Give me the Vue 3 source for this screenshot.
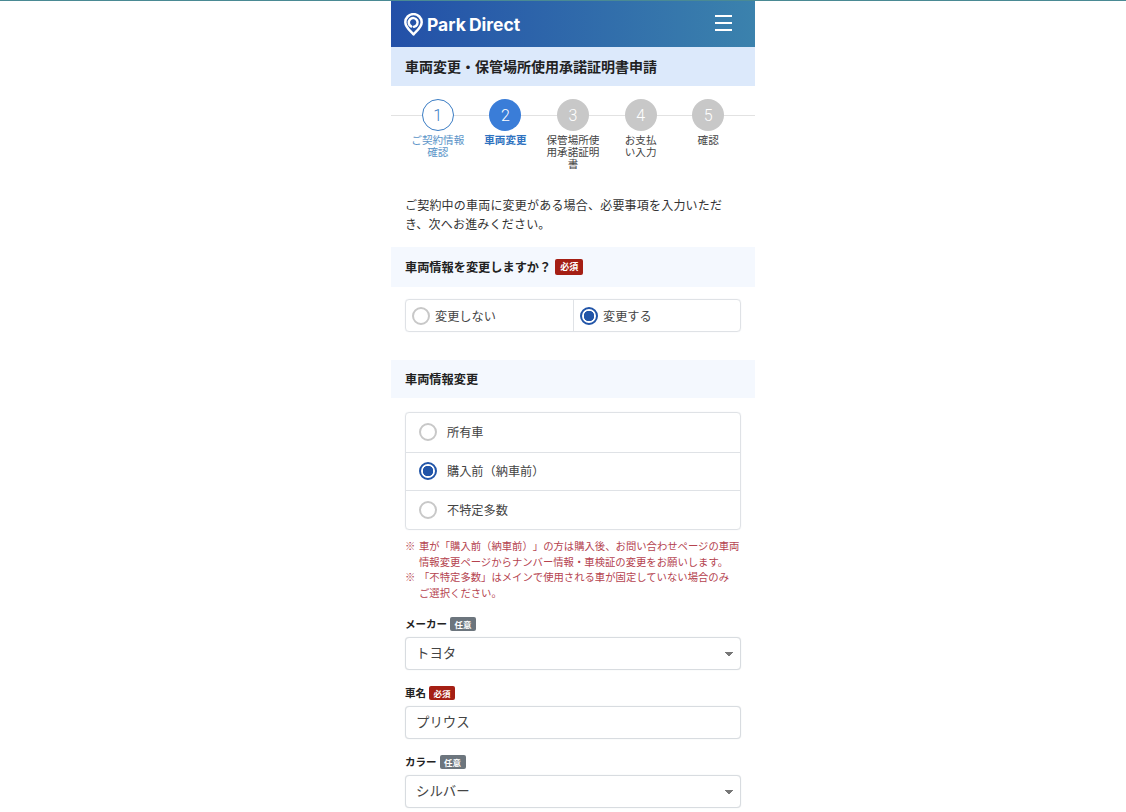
<template>
  <div class="page">
    <div class="phone">
      <header class="header">
        <div class="logo">
          <svg width="19" height="23" viewBox="0 0 19 23" fill="none">
            <path d="M9.5 21.4 C7.4 18.8 1.3 14.6 1.3 9.3 A8.2 8.2 0 0 1 17.7 9.3 C17.7 14.6 11.6 18.8 9.5 21.4 Z" stroke="#fff" stroke-width="2.5" stroke-linejoin="round" />
            <path d="M7.2 13.4 A4.4 4.4 0 1 1 10 13.8" stroke="#fff" stroke-width="2.5" stroke-linecap="round" />
          </svg>
          <span>Park Direct</span>
        </div>
        <button class="menu" type="button" aria-label="menu">
          <i></i><i></i><i></i>
        </button>
      </header>

      <h1 class="title">車両変更・保管場所使用承諾証明書申請</h1>

      <ol class="steps">
        <li v-for="(s, i) in steps" :key="s" class="step" :class="{ done: i === 0, current: i === 1 }">
          <span class="num">{{ i + 1 }}</span>
          <span class="step-label">{{ s }}</span>
        </li>
      </ol>

      <p class="lead">ご契約中の車両に変更がある場合、必要事項を入力いただき、次へお進みください。</p>

      <h2 class="band">車両情報を変更しますか？<span class="badge req big">必須</span></h2>

      <div class="choice">
        <label v-for="c in changeOptions" :key="c" class="choice-item" @click="change = c">
          <span class="radio" :class="{ on: change === c }"></span>{{ c }}
        </label>
      </div>

      <h2 class="band second">車両情報変更</h2>

      <div class="list">
        <label v-for="o in ownerOptions" :key="o" class="list-item" @click="owner = o">
          <span class="radio" :class="{ on: owner === o }"></span>{{ o }}
        </label>
      </div>

      <ul class="notes">
        <li>車が「購入前（納車前）」の方は購入後、お問い合わせページの車両情報変更ページからナンバー情報・車検証の変更をお願いします。</li>
        <li>「不特定多数」はメインで使用される車が固定していない場合のみ<br />ご選択ください。</li>
      </ul>

      <div class="field first">
        <div class="field-label">メーカー<span class="badge opt">任意</span></div>
        <select v-model="maker" class="control">
          <option>トヨタ</option>
        </select>
      </div>
      <div class="field">
        <div class="field-label">車名<span class="badge req">必須</span></div>
        <input v-model="carName" class="control" type="text" />
      </div>
      <div class="field">
        <div class="field-label">カラー<span class="badge opt">任意</span></div>
        <select v-model="color" class="control">
          <option>シルバー</option>
        </select>
      </div>
    </div>
  </div>
</template>

<script setup>
import { ref } from 'vue'

const steps = ['ご契約情報確認', '車両変更', '保管場所使用承諾証明書', 'お支払\nい入力', '確認']
const changeOptions = ['変更しない', '変更する']
const ownerOptions = ['所有車', '購入前（納車前）', '不特定多数']

const change = ref('変更する')
const owner = ref('購入前（納車前）')
const maker = ref('トヨタ')
const carName = ref('プリウス')
const color = ref('シルバー')
</script>

<style scoped>
.page {
  height: 812px;
  overflow: hidden;
  border-top: 1px solid #4a8a94;
  box-sizing: border-box;
  background: #fff;
  font-family: "Noto Sans CJK JP", "Noto Sans", sans-serif;
  color: #333;
  text-spacing-trim: space-all;
}

.phone {
  width: 364px;
  margin-left: 391px;
}

.header {
  height: 46px;
  display: flex;
  align-items: center;
  justify-content: space-between;
  padding: 0 23px 0 13px;
  background: linear-gradient(90deg, #2350a8, #3b82ad);
}

.logo {
  display: flex;
  align-items: center;
  gap: 4px;
  color: #fff;
  font-family: Inter, sans-serif;
  font-weight: 700;
  font-size: 17.5px;
  word-spacing: -1px;
}

.menu {
  width: 17px;
  margin-bottom: 2px;
  padding: 0;
  border: none;
  background: none;
  display: flex;
  flex-direction: column;
  gap: 5px;
}

.menu i {
  display: block;
  height: 2px;
  background: #fff;
}

.title {
  margin: 0;
  height: 39px;
  padding: 0 14px;
  line-height: 39px;
  background: #dce9fb;
  font-size: 14px;
  font-weight: 700;
  color: #222;
}

.steps {
  list-style: none;
  margin: 0;
  padding: 13px 13px 0;
  height: 86px;
  display: grid;
  grid-template-columns: repeat(5, 1fr);
  background: linear-gradient(#e2e2e2, #e2e2e2) 0 29px / 100% 1px no-repeat;
}

.step {
  display: flex;
  flex-direction: column;
  align-items: center;
  color: #444;
}

.num {
  width: 32px;
  height: 32px;
  border-radius: 50%;
  box-sizing: border-box;
  display: flex;
  align-items: center;
  justify-content: center;
  background: #c8c8c8;
  color: #fff;
  font-family: Roboto, sans-serif;
  font-weight: 300;
  font-size: 16px;
}

.step-label {
  width: 56px;
  margin-top: 3px;
  font-size: 10.6px;
  line-height: 12px;
  text-align: center;
  overflow-wrap: anywhere;
  white-space: pre-line;
}

.done {
  color: #5a94c8;
}

.done .num {
  background: #fff;
  border: 1px solid #3b7dc4;
  color: #3b7dc4;
}

.done .step-label {
  width: 60px;
}

.current {
  color: #2f72c0;
}

.current .num {
  background: #3a7dd8;
}

.current .step-label {
  font-weight: 700;
}

.lead {
  margin: 0;
  height: 62px;
  padding: 10px 14px 0;
  box-sizing: border-box;
  font-size: 12px;
  letter-spacing: 0.2px;
  line-height: 19px;
  color: #333;
}

.band {
  display: flex;
  align-items: center;
  margin: 0;
  height: 40px;
  padding: 0 14px;
  background: #f4f8fe;
  font-size: 12.2px;
  font-weight: 700;
  color: #222;
}

.band.second {
  height: 38px;
  margin-top: 28px;
}

.badge {
  display: inline-block;
  margin-left: 3px;
  padding: 0 4.5px;
  height: 14px;
  line-height: 14px;
  border-radius: 2px;
  font-size: 8.5px;
  font-weight: 700;
  color: #fff;
}

.badge.big {
  margin-left: 4px;
  height: 16px;
  line-height: 16px;
  padding: 0 5px;
  font-size: 9px;
}

.req {
  background: #a51f14;
}

.opt {
  background: #6c757d;
}

.radio {
  flex: none;
  width: 18px;
  height: 18px;
  box-sizing: border-box;
  border: 2px solid #c8c8c8;
  border-radius: 50%;
  background: #fff;
}

.radio.on {
  border-color: #2255a8;
  background: radial-gradient(circle, #2255a8 0 5px, #fff 5.5px);
}

.choice {
  display: grid;
  grid-template-columns: 1fr 1fr;
  height: 33px;
  margin: 12px 14px 0;
  box-sizing: border-box;
  border: 1px solid #dfe2e6;
  border-radius: 4px;
  box-shadow: 0 0 1px #dfe2e6;
}

.choice-item {
  display: flex;
  align-items: center;
  gap: 5px;
  padding-left: 6px;
  font-size: 12.2px;
  color: #444;
}

.choice-item + .choice-item {
  border-left: 1px solid #dfe2e6;
}

.list {
  margin: 14px 14px 0;
  height: 118px;
  box-sizing: border-box;
  border: 1px solid #dfe2e6;
  border-radius: 4px;
  box-shadow: 0 0 1px #dfe2e6;
  display: grid;
  grid-auto-rows: 1fr;
}

.list-item {
  display: flex;
  align-items: center;
  gap: 10px;
  padding-left: 13px;
  font-size: 12.2px;
  color: #444;
}

.list-item + .list-item {
  border-top: 1px solid #dfe2e6;
}

.notes {
  list-style: none;
  margin: 8px 14px 0;
  padding: 0;
  font-size: 10.35px;
  line-height: 15.6px;
  color: #b5434f;
}

.notes li {
  position: relative;
  padding-left: 14px;
}

.notes li::before {
  content: '※';
  position: absolute;
  left: 0;
}

.field {
  margin: 15px 14px 0;
}

.field.first {
  margin-top: 16px;
}

.field-label {
  display: flex;
  align-items: center;
  height: 15px;
  margin-bottom: 6px;
  font-size: 10.5px;
  font-weight: 700;
  color: #222;
}

.control {
  display: block;
  width: 100%;
  height: 33px;
  box-sizing: border-box;
  padding: 0 10px 4px;
  border: 1px solid #d8dce0;
  border-radius: 4px;
  box-shadow: 0 0 1px #d8dce0;
  outline: none;
  appearance: none;
  font-family: inherit;
  font-size: 13.4px;
  color: #444;
  background-color: #fff;
}

select.control {
  background-image: linear-gradient(45deg, transparent 50%, #777 50%), linear-gradient(-45deg, transparent 50%, #777 50%);
  background-size: 4px 4px;
  background-position: 319px 14px, 323px 14px;
  background-repeat: no-repeat;
}
</style>

<style>
html, body {
  margin: 0;
  overflow: hidden;
}
</style>
